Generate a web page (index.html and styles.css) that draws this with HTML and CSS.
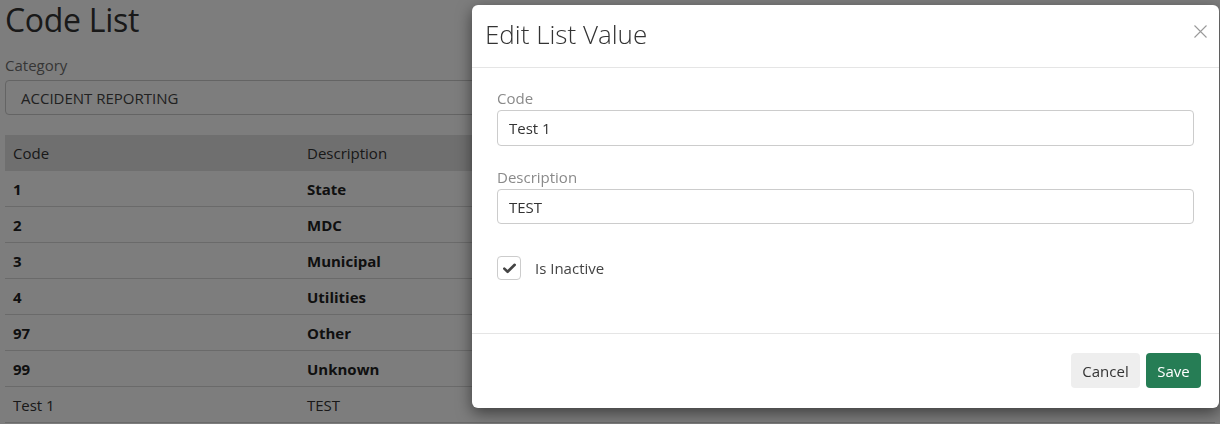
FILE: index.html
```html
<!DOCTYPE html>
<html>
<head>
<meta charset="utf-8">
<link rel="stylesheet" href="styles.css">
</head>
<body>
<div class="page">
  <h1 class="page-title">Code List</h1>
  <div class="field">
    <label class="field-label">Category</label>
    <div class="select">ACCIDENT REPORTING</div>
  </div>
  <table class="grid">
    <thead>
      <tr><th class="c1">Code</th><th class="c2">Description</th><th></th></tr>
    </thead>
    <tbody>
      <tr class="b"><td>1</td><td>State</td><td></td></tr>
      <tr class="b"><td>2</td><td>MDC</td><td></td></tr>
      <tr class="b"><td>3</td><td>Municipal</td><td></td></tr>
      <tr class="b"><td>4</td><td>Utilities</td><td></td></tr>
      <tr class="b"><td>97</td><td>Other</td><td></td></tr>
      <tr class="b"><td>99</td><td>Unknown</td><td></td></tr>
      <tr><td>Test 1</td><td>TEST</td><td></td></tr>
    </tbody>
  </table>
</div>
<div class="backdrop"></div>
<div class="modal">
  <div class="modal-header">
    <h2 class="modal-title">Edit List Value</h2>
    <span class="close"><svg width="13" height="13" viewBox="0 0 13 13"><path d="M0.5 0.5L12.5 12.5M12.5 0.5L0.5 12.5" stroke="#9a9a9a" stroke-width="1.1" fill="none"/></svg></span>
  </div>
  <div class="modal-body">
    <div class="mfield">
      <label class="mlabel">Code</label>
      <div class="input">Test 1</div>
    </div>
    <div class="mfield">
      <label class="mlabel">Description</label>
      <div class="input input-short">TEST</div>
    </div>
    <div class="check-row">
      <span class="checkbox"><svg width="13" height="11" viewBox="0 0 13 11"><path d="M1.3 5.6L4.6 8.8L11.7 1.8" stroke="#444" stroke-width="2.6" fill="none" stroke-linecap="round" stroke-linejoin="round"/></svg></span>
      <span class="check-label">Is Inactive</span>
    </div>
  </div>
  <div class="modal-footer">
    <button class="btn btn-cancel">Cancel</button>
    <button class="btn btn-save">Save</button>
  </div>
</div>
</body>
</html>
```
FILE: styles.css
```css
html, body {
  margin: 0;
  padding: 0;
  background: #fff;
  font-family: "Open Sans", "Noto Sans", sans-serif;
  color: #222;
  width: 1220px;
  height: 424px;
  overflow: hidden;
}
.page {
  padding: 0 5px;
}
.page-title {
  margin: 0;
  font-size: 32px;
  font-weight: 400;
  line-height: 40px;
  color: #333;
  letter-spacing: -0.3px;
}
.field {
  margin-top: 15px;
}
.field-label {
  display: block;
  font-size: 15px;
  line-height: 20px;
  color: #6f6f6f;
  margin-bottom: 5px;
}
.select {
  height: 35px;
  box-sizing: border-box;
  border: 1px solid #ccc;
  border-radius: 4px;
  padding: 0 15px;
  font-size: 15px;
  line-height: 34px;
  color: #444;
}
.grid {
  margin-top: 20px;
  width: 100%;
  border-collapse: collapse;
  font-size: 15px;
}
.grid th {
  background: #e3e3e3;
  font-weight: 400;
  text-align: left;
  height: 36px;
  padding: 0 8px;
  color: #333;
}
.grid th.c1 { width: 278px; }
.grid th.c2 { width: 25%; }
.grid td {
  height: 35px;
  padding: 0 8px;
  border-bottom: 1px solid #d9d9d9;
  color: #333;
}
.grid tr.b td { font-weight: 700; color: #222; }
.backdrop {
  position: fixed;
  inset: 0;
  background: rgba(0, 0, 0, 0.51);
}
.modal {
  position: absolute;
  left: 472px;
  top: 5px;
  width: 747px;
  height: 403px;
  background: #fff;
  border-radius: 6px;
  box-shadow: 0 5px 15px rgba(0, 0, 0, 0.5);
  display: flex;
  flex-direction: column;
}
.modal-header {
  height: 63px;
  box-sizing: border-box;
  border-bottom: 1px solid #e5e5e5;
  display: flex;
  align-items: center;
  justify-content: space-between;
  padding: 0 12px 0 13px;
}
.modal-title {
  margin: 0 0 4px 0;
  font-size: 26px;
  font-weight: 300;
  color: #333;
  line-height: 32px;
}
.close {
  display: flex;
  margin-top: -10px;
}
.modal-body {
  flex: 1;
  padding: 20px 25px 0 25px;
}
.mfield {
  margin-bottom: 21px;
}
.mlabel {
  display: block;
  font-size: 15px;
  line-height: 20px;
  color: #8a8a8a;
  margin-bottom: 2px;
}
.input {
  height: 36px;
  box-sizing: border-box;
  border: 1px solid #ccc;
  border-radius: 4px;
  padding: 0 11px;
  font-size: 15px;
  line-height: 34px;
  color: #333;
}
.input-short { height: 35px; }
.check-row {
  display: flex;
  align-items: center;
  margin-top: 32px;
}
.checkbox {
  width: 24px;
  height: 24px;
  box-sizing: border-box;
  border: 1px solid #ccc;
  border-radius: 4px;
  display: flex;
  align-items: center;
  justify-content: center;
}
.check-label {
  margin-left: 14px;
  font-size: 15px;
  color: #444;
}
.modal-footer {
  height: 75px;
  box-sizing: border-box;
  border-top: 1px solid #e5e5e5;
  display: flex;
  justify-content: flex-end;
  align-items: flex-start;
  padding: 19px 18px 0 0;
  gap: 6px;
}
.btn {
  height: 35px;
  border: none;
  border-radius: 4px;
  font-family: "Open Sans", "Noto Sans", sans-serif;
  font-size: 15px;
  padding: 0;
}
.btn-cancel {
  background: #eee;
  color: #333;
  width: 69px;
}
.btn-save {
  background: #267d55;
  color: #fff;
  width: 55px;
}
```
